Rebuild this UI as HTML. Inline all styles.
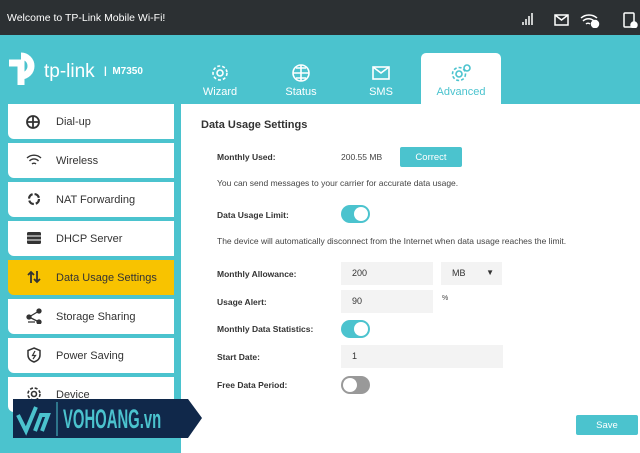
<!DOCTYPE html>
<html><head><meta charset="utf-8"><style>
*{margin:0;padding:0;box-sizing:border-box}
body{width:640px;height:453px;overflow:hidden;background:#4bc3ce;font-family:"Liberation Sans",sans-serif;position:relative}
.top{position:absolute;left:0;top:0;width:640px;height:35px;background:#2c3033;color:#fff;font-size:10.5px}
.top span{position:absolute;left:7px;top:12px}
.side{position:absolute;left:8px;width:166px;height:35px;background:#fff;border-radius:0 0 0 6px;font-size:11px;color:#333}
.side .t{position:absolute;left:48px;top:12px}
.side .i{position:absolute;left:18px;top:9px;width:16px;height:16px}
.hl{background:#f8c300}
.panel{position:absolute;left:181px;top:104px;width:459px;height:349px;background:#fff}
.tab{position:absolute;top:64px;width:70px;text-align:center;color:#fff;font-size:11px}
.tab svg{display:block;margin:0 auto 4px}
.lbl{position:absolute;left:36px;font-size:8.5px;font-weight:bold;color:#333}
.txt{position:absolute;font-size:8.5px;color:#444}
.inp{position:absolute;left:160px;height:23px;background:#f3f3f3;font-size:9px;color:#333;padding:6px 0 0 11px}
.tg{position:absolute;left:160px;width:29px;height:18px;border-radius:9px;background:#4bc3ce}
.tg:after{content:"";position:absolute;top:2px;right:2px;width:14px;height:14px;border-radius:50%;background:#fff}
.tg.off{background:#999}.tg.off:after{left:2px;right:auto}
.btn{position:absolute;background:#4bc3ce;color:#fff;font-size:9.5px;text-align:center;border-radius:2px}
</style></head><body>
<div class="top"><span>Welcome to TP-Link Mobile Wi-Fi!</span>
<svg style="position:absolute;left:520px;top:12px" width="120" height="16" viewBox="0 0 120 16" fill="none" stroke="#fff" stroke-width="1.5">
<path d="M3 13v-3M6 13V7M9 13V4M12 13V1"/><rect x="35" y="3" width="13" height="10"/><path d="M35 3l6.5 5 6.5-5"/>
<path d="M61 6a12 12 0 0 1 16 0M63 9a8 8 0 0 1 11 0M66 12a3 3 0 0 1 4 0"/><circle cx="75" cy="12" r="3.5" fill="#fff"/>
<rect x="104" y="1" width="10" height="14" rx="1"/><circle cx="114" cy="13" r="3" fill="#fff"/></svg></div>
<svg style="position:absolute;left:6px;top:52px" width="36" height="36" viewBox="0 0 36 36"><path d="M3 11h12v22" stroke="#fff" stroke-width="7" fill="none"/><path d="M15 4a10 10 0 1 1 0 20" stroke="#fff" stroke-width="7" fill="none"/></svg>
<div style="position:absolute;left:44px;top:61px;color:#fff;font-size:19px">tp-link</div>
<div style="position:absolute;left:104px;top:66px;color:#fff;font-size:10px;font-weight:bold">|&nbsp; M7350</div>
<div class="tab" style="left:185px"><svg width="20" height="18" viewBox="0 0 20 18" fill="none" stroke="#fff" stroke-width="1.6"><circle cx="10" cy="9" r="3"/><circle cx="10" cy="9" r="7" stroke-dasharray="3 2"/></svg>Wizard</div>
<div class="tab" style="left:266px"><svg width="20" height="18" viewBox="0 0 20 18" fill="none" stroke="#fff" stroke-width="1.6"><circle cx="10" cy="9" r="8"/><path d="M2 9h16M10 1v16M5 4h10M5 14h10"/></svg>Status</div>
<div class="tab" style="left:346px"><svg width="20" height="18" viewBox="0 0 20 18" fill="none" stroke="#fff" stroke-width="1.6"><rect x="2" y="3" width="16" height="12"/><path d="M2 3l8 6 8-6"/></svg>SMS</div>
<div style="position:absolute;left:421px;top:53px;width:80px;height:52px;background:#fff;border-radius:5px 5px 0 0"></div>
<div class="tab" style="left:426px;color:#4bc3ce"><svg width="24" height="18" viewBox="0 0 24 18" fill="none" stroke="#4bc3ce" stroke-width="1.6"><circle cx="10" cy="10" r="3"/><circle cx="10" cy="10" r="6.5" stroke-dasharray="3 2"/><circle cx="18" cy="4" r="3"/></svg>Advanced</div>
<div class="side" style="top:104px"><svg class="i" viewBox="0 0 16 16" fill="none" stroke="#333" stroke-width="1.8"><circle cx="7" cy="9" r="6"/><path d="M1 9h12M7 3v12"/></svg><span class="t">Dial-up</span></div>
<div class="side" style="top:143px"><svg class="i" viewBox="0 0 16 16" fill="none" stroke="#333" stroke-width="1.4"><path d="M1 6a10 10 0 0 1 14 0M3.5 9a6 6 0 0 1 9 0M6 12a3 3 0 0 1 4 0"/></svg><span class="t">Wireless</span></div>
<div class="side" style="top:182px"><svg class="i" viewBox="0 0 16 16" fill="none" stroke="#333" stroke-width="2.2"><circle cx="8" cy="8" r="5" stroke-dasharray="6 2"/></svg><span class="t">NAT Forwarding</span></div>
<div class="side" style="top:221px"><svg class="i" viewBox="0 0 16 16"><rect x="1" y="2" width="14" height="12" rx="1.5" fill="#333"/><path d="M1 6h14M1 10h14" stroke="#fff"/></svg><span class="t">DHCP Server</span></div>
<div class="side hl" style="top:260px"><svg class="i" viewBox="0 0 16 16" fill="none" stroke="#333" stroke-width="1.8"><path d="M5 14V3M2 6l3-3 3 3M11 2v11M8 10l3 3 3-3"/></svg><span class="t">Data Usage Settings</span></div>
<div class="side" style="top:299px"><svg class="i" viewBox="0 0 16 16" fill="#333" stroke="#333" stroke-width="1.3"><circle cx="3" cy="9" r="2"/><circle cx="13" cy="3" r="2"/><circle cx="13" cy="14" r="2"/><path d="M3 9l10-6M3 9l10 5M2 14h7"/></svg><span class="t">Storage Sharing</span></div>
<div class="side" style="top:338px"><svg class="i" viewBox="0 0 16 16" fill="none" stroke="#333" stroke-width="1.5"><path d="M8 1l6 2.5v4.5c0 4-3 6-6 7-3-1-6-3-6-7V3.5z"/><path d="M9 4l-2.5 4.5h3L7 12" stroke-width="1.2"/></svg><span class="t">Power Saving</span></div>
<div class="side" style="top:377px"><svg class="i" viewBox="0 0 16 16" fill="none" stroke="#333" stroke-width="1.6"><circle cx="8" cy="8" r="2.5"/><circle cx="8" cy="8" r="6" stroke-dasharray="3 1.8"/></svg><span class="t">Device</span></div>
<div class="panel">
<div style="position:absolute;left:20px;top:15px;font-size:11px;font-weight:bold;color:#333">Data Usage Settings</div>
<div class="lbl" style="top:48px">Monthly Used:</div>
<div class="txt" style="left:160px;top:48px">200.55 MB</div>
<div class="btn" style="left:219px;top:43px;width:62px;height:20px;padding-top:5px">Correct</div>
<div class="txt" style="left:36px;top:74px">You can send messages to your carrier for accurate data usage.</div>
<div class="lbl" style="top:106px">Data Usage Limit:</div>
<div class="tg" style="top:101px"></div>
<div class="txt" style="left:36px;top:132px">The device will automatically disconnect from the Internet when data usage reaches the limit.</div>
<div class="lbl" style="top:165px">Monthly Allowance:</div>
<div class="inp" style="top:158px;width:92px">200</div>
<div class="inp" style="left:260px;top:158px;width:61px">MB<span style="position:absolute;right:8px;font-size:8px">▼</span></div>
<div class="lbl" style="top:193px">Usage Alert:</div>
<div class="inp" style="top:186px;width:92px">90</div>
<div class="txt" style="left:261px;top:191px;font-size:7px">%</div>
<div class="lbl" style="top:220px">Monthly Data Statistics:</div>
<div class="tg" style="top:216px"></div>
<div class="lbl" style="top:248px">Start Date:</div>
<div class="inp" style="top:241px;width:162px">1</div>
<div class="lbl" style="top:276px">Free Data Period:</div>
<div class="tg off" style="top:272px"></div>
<div class="btn" style="left:395px;top:311px;width:62px;height:20px;padding-top:5px">Save</div>
</div>
<svg style="position:absolute;left:13px;top:399px" width="190" height="40" viewBox="0 0 190 40"><path d="M0 0h175l14 19-14 20H0z" fill="#10284a"/><path d="M5 16l8 16 10-24M22 32l6-16h7l-6 16" stroke="#4bc3ce" stroke-width="4" fill="none"/><path d="M44 3v34" stroke="#4bc3ce"/></svg>
<div style="position:absolute;left:63px;top:404px;color:#4bc3ce;font-size:27px;font-weight:bold;transform:scaleX(.55);transform-origin:left">VOHOANG.vn</div>
</body></html>
